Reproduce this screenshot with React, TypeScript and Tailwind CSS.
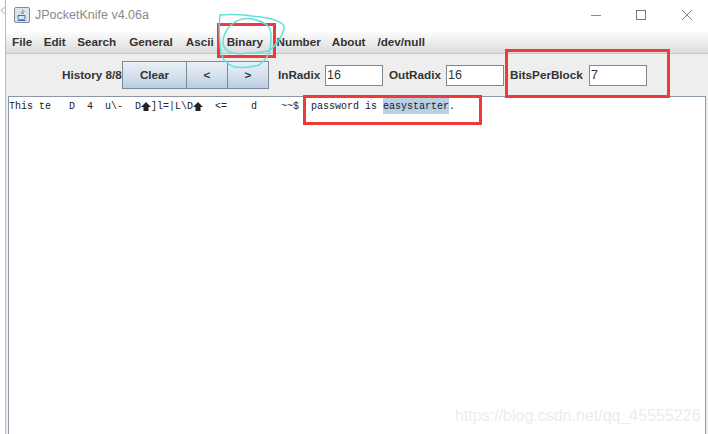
import React from "react";

const sans = "font-['Liberation_Sans',Arial,sans-serif]";

function Menu({ label, className }: { label: string; className: string }) {
  return <span className={`text-[11.7px] font-bold text-[#333333] leading-[14px] ${className}`}>{label}</span>;
}

function Field({ value, className }: { value: string; className: string }) {
  return (
    <div className={`h-[21px] w-[58px] bg-white border border-[#7a8a99] pl-[1px] text-[12.5px] leading-[19px] text-[#333333] ${className}`}>
      {value}
    </div>
  );
}

function Label({ children, className }: { children: React.ReactNode; className: string }) {
  return <span className={`text-[11.7px] font-bold text-[#333333] whitespace-nowrap ${className}`}>{children}</span>;
}

function Btn({ children, width }: { children: React.ReactNode; width: string }) {
  return (
    <div className={`h-[28px] ${width} flex items-center justify-center border border-[#7a8a99] -ml-px bg-gradient-to-b from-[#e8eff6] via-[#d6e2ee] to-[#bacde0] text-[11.7px] font-bold text-[#333333]`}>
      {children}
    </div>
  );
}

function Arrow() {
  return (
    <span className="inline-block w-[10px] text-center align-baseline">
      <svg width="10" height="9" viewBox="0 0 10 9" className="inline-block">
        <path d="M5 0L10 5H7.500V9H2.500V5H0z" fill="#222222" />
      </svg>
    </span>
  );
}

export default function App() {
  return (
    <div className={`relative w-[708px] h-[434px] overflow-hidden bg-white ${sans}`}>
      <svg className="absolute left-0 top-[6px]" width="6" height="9" viewBox="0 0 6 9" fill="none">
        <path d="M5 1L1 4.500L5 8" stroke="#cfcfcf" strokeWidth="1.500" />
      </svg>
      <div className="ml-[5px] h-full border-l border-[#b9bcc0] flex flex-col">
        {/* title bar */}
        <div className="h-[30px] flex items-center shrink-0 pl-[8px]">
          <svg width="16" height="16" viewBox="0 0 16 16" className="shrink-0">
            <rect x="0.5" y="0.5" width="15" height="15" rx="1.500" fill="#dbe5ef" stroke="#7d8a99" />
            <path d="M8.500 2.500c1.500 1.500-2 2.500-.5 4.500M10 4c.5 1-1.500 1.500-.8 3" stroke="#d2691e" strokeWidth="1" fill="none" />
            <path d="M4 8.500h7v2.500c0 1-1 1.800-2 1.800H6c-1 0-2-.8-2-1.800zM3.500 13.500h8" stroke="#3f6ea0" strokeWidth="1" fill="none" />
          </svg>
          <span className="ml-[5px] text-[12.5px] text-[#8a8a8a]">JPocketKnife v4.06a</span>
          <div className="ml-auto flex items-center pr-[16px]">
            <div className="w-[10px] h-px bg-[#8a8a8a] mr-[35px]" />
            <div className="w-[10px] h-[10px] border border-[#777777] mr-[36px]" />
            <svg width="10" height="10" viewBox="0 0 10 10">
              <path d="M0 0l10 10M10 0L0 10" stroke="#888888" strokeWidth="1" />
            </svg>
          </div>
        </div>
        {/* menu */}
        <div className="h-[24px] shrink-0 flex items-center pl-[6px] bg-gradient-to-b from-white to-[#dcdcdc] border-b border-[#c8c8c8]">
          <Menu label="File" className="" />
          <Menu label="Edit" className="ml-[11.5px]" />
          <Menu label="Search" className="ml-[11.5px]" />
          <Menu label="General" className="ml-[13px]" />
          <Menu label="Ascii" className="ml-[13px]" />
          <Menu label="Binary" className="ml-[13px]" />
          <Menu label="Number" className="ml-[13.5px]" />
          <Menu label="About" className="ml-[11px]" />
          <Menu label="/dev/null" className="ml-[12px]" />
        </div>
        {/* toolbar */}
        <div className="h-[42px] shrink-0 bg-[#eeeeee] flex items-center pl-[56px]">
          <Label className="w-[60px]">History 8/8</Label>
          <div className="flex ml-[1px]">
            <Btn width="w-[65px]">Clear</Btn>
            <Btn width="w-[42px]">&lt;</Btn>
            <Btn width="w-[42px]">&gt;</Btn>
          </div>
          <Label className="ml-[9px] w-[42px]">InRadix</Label>
          <Field value="16" className="ml-[5px]" />
          <Label className="ml-[6px] w-[52px]">OutRadix</Label>
          <Field value="16" className="ml-[5px]" />
          <Label className="ml-[6px] w-[74px]">BitsPerBlock</Label>
          <Field value="7" className="ml-[5px]" />
        </div>
        {/* text area */}
        <div className="flex-1 bg-[#eeeeee] pl-[2px] pr-[2px]">
          <div className="h-full bg-white border-l border-t border-r border-[#8a97a5] font-['Liberation_Mono',monospace] text-[10px] leading-[14px] text-[#222222] whitespace-pre">
            <span>This te   D  4  u\-  D</span>
            <Arrow />
            <span>]l=|L\D</span>
            <Arrow />
            <span>  &lt;=    d    ~~$  password is </span>
            <span className="inline-block bg-[#b8cfe5] pt-[3px]">easystarter</span>
            <span>.</span>
          </div>
        </div>
      </div>

      {/* annotations drawn over the screenshot */}
      <div className="absolute left-[217px] top-[23px] w-[59px] h-[35px] border-[3px] border-[#f03a3a]" />
      <div className="absolute left-[505px] top-[49px] w-[165px] h-[49px] border-[3px] border-[#f03a3a]" />
      <div className="absolute left-[303px] top-[95px] w-[179px] h-[30px] border-[3px] border-[#f03a3a]" />
      <svg className="absolute left-0 top-0" width="708" height="80" viewBox="0 0 708 80" fill="none" stroke="#62e0dc" strokeWidth="1.500">
        <path d="M220 15C232 14 244 15 252 16C262 17 270 18 275 20C280 22 284 24 284 27C284 31 282 35 280 38C277 43 274 47 270 50C263 53 256 53 249 53C241 54 234 54 229 52C225 49 223 47 223 43C223 38 225 33 227 30C229 26 232 24 235 22C240 19 246 18 252 19C258 20 263 22 267 25C270 28 271 32 271 35C271 42 271 48 269 53C267 58 263 62 259 65C252 67 243 68 235 67C230 66 227 63 224 60C221 55 220 49 220 43C219 33 219 24 220 15Z" />
      </svg>

      <div className="absolute left-[455px] top-[407px] text-[16px] text-[#ececec] leading-[18px]">https://blog.csdn.net/qq_45555226</div>
    </div>
  );
}
